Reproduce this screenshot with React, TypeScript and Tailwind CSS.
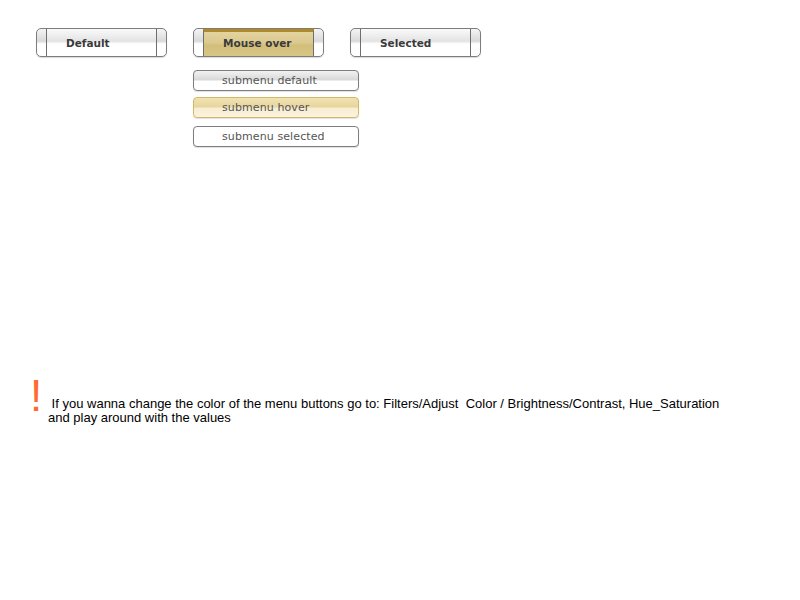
const btnText = "font-['DejaVu_Sans',Verdana,sans-serif]";

function MenuButton({ label, hover }: { label: string; hover?: boolean }) {
  return (
    <div className="h-[29px] w-[131px] rounded-[5px] border border-[#7d7d7d] bg-[linear-gradient(#f4f4f4,#d9d9d9_45%,#ffffff_55%,#ffffff)] shadow-[0_1px_1px_rgba(0,0,0,0.15)] flex overflow-hidden">
      <div className="w-[9px] shrink-0" />
      <div
        className={
          hover
            ? "flex-1 flex items-center border-x border-[#6e6e6e] border-t-[3px] border-t-[#b08a2a] bg-[linear-gradient(#e3d39e,#dac98f_45%,#d3bf7b_55%,#d8c585)] pl-[19px]"
            : "flex-1 flex items-center border-x border-[#6e6e6e] bg-[linear-gradient(#fafafa,#e3e3e3_45%,#ffffff_55%,#ffffff)] pl-[19px] pt-[2px]"
        }
      >
        <span className={`${btnText} text-[10.5px] font-bold text-[#3a3a3a]`}>{label}</span>
      </div>
      <div className="w-[9px] shrink-0" />
    </div>
  );
}

function SubButton({ label, variant }: { label: string; variant: "default" | "hover" | "selected" }) {
  const cls =
    variant === "hover"
      ? "border-[#d2b96a] bg-[linear-gradient(#f0e2b4,#e8d69c_45%,#f7edd2_55%,#faf3df)]"
      : variant === "selected"
      ? "border-[#7d7d7d] bg-white"
      : "border-[#7d7d7d] bg-[linear-gradient(#f2f2f2,#d9d9d9_45%,#ffffff_55%,#ffffff)]";
  return (
    <div className={`h-[21px] w-[166px] rounded-[4px] border ${cls} flex items-center pl-[28px] pt-[2px] shadow-[0_1px_1px_rgba(0,0,0,0.12)]`}>
      <span className={`${btnText} text-[11px] text-[#555] tracking-[0.1px]`}>{label}</span>
    </div>
  );
}

export default function App() {
  return (
    <div className="w-[800px] h-[600px] bg-white relative">
      <div className="pl-[36px] pt-[28px]">
        <div className="flex gap-[26px]">
          <MenuButton label="Default" />
          <MenuButton label="Mouse over" hover />
          <MenuButton label="Selected" />
        </div>
        <div className="ml-[157px] mt-[13px] flex flex-col">
          <SubButton label="submenu default" variant="default" />
          <div className="mt-[6px]">
            <SubButton label="submenu hover" variant="hover" />
          </div>
          <div className="mt-[8px]">
            <SubButton label="submenu selected" variant="selected" />
          </div>
        </div>
      </div>

      <div className="absolute left-[30px] top-[374px] flex font-['Liberation_Sans',Arial,sans-serif]">
        <span className="text-[#ff6a33] text-[44px] leading-[44px] w-[18px]">!</span>
        <p className="pt-[23px] text-[13px] leading-[14px] text-black">
          &nbsp;If you wanna change the color of the menu buttons go to: Filters/Adjust&nbsp; Color / Brightness/Contrast, Hue_Saturation
          <br />
          and play around with the values
        </p>
      </div>
    </div>
  );
}
